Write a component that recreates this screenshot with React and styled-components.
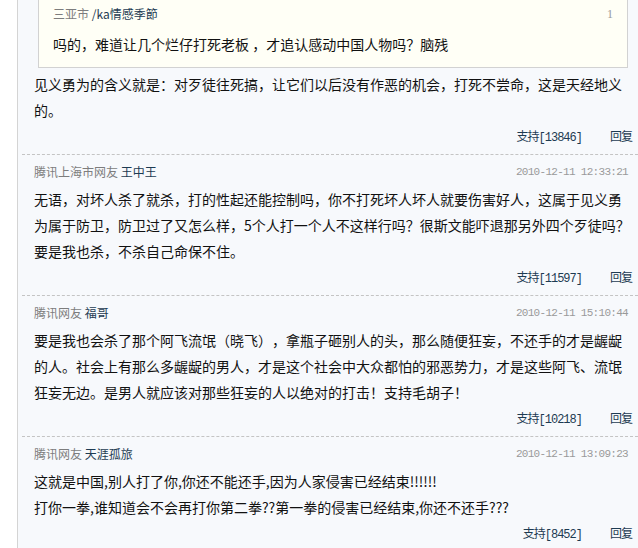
import React from "react";
import styled, { createGlobalStyle } from "styled-components";

const GlobalStyle = createGlobalStyle`
  html, body {
    margin: 0;
    padding: 0;
    background: #ffffff;
  }
  body {
    font-family: "Noto Sans CJK SC", "Liberation Sans", sans-serif;
    text-spacing-trim: space-all;
    overflow: hidden;
  }
`;

const comments = [
  {
    region: "腾讯上海市网友",
    user: "王中王",
    time: "2010-12-11 12:33:21",
    lines: [
      "无语，对坏人杀了就杀，打的性起还能控制吗，你不打死坏人坏人就要伤害好人，这属于见义勇为属于防卫，防卫过了又怎么样，5个人打一个人不这样行吗？很斯文能吓退那另外四个歹徒吗？要是我也杀，不杀自己命保不住。",
    ],
    votes: 11597,
  },
  {
    region: "腾讯网友",
    user: "福哥",
    time: "2010-12-11 15:10:44",
    lines: [
      "要是我也会杀了那个阿飞流氓（晓飞），拿瓶子砸别人的头，那么随便狂妄，不还手的才是龌龊的人。社会上有那么多龌龊的男人，才是这个社会中大众都怕的邪恶势力，才是这些阿飞、流氓狂妄无边。是男人就应该对那些狂妄的人以绝对的打击！支持毛胡子！",
    ],
    votes: 10218,
  },
  {
    region: "腾讯网友",
    user: "天涯孤旅",
    time: "2010-12-11 13:09:23",
    lines: [
      "这就是中国,别人打了你,你还不能还手,因为人家侵害已经结束!!!!!!",
      "打你一拳,谁知道会不会再打你第二拳??第一拳的侵害已经结束,你还不还手???",
    ],
    votes: 8452,
  },
];

function Actions({ votes }) {
  return (
    <ActionRow>
      <ActionLink>支持[{votes}]</ActionLink>
      <ActionLink>回复</ActionLink>
    </ActionRow>
  );
}

export default function App() {
  return (
    <Page>
      <GlobalStyle />
      <Thread>
        <Comment $first>
          <Quote>
            <QuoteHead>
              <span>
                <Meta>三亚市</Meta> <User>/ka情感季節</User>
              </span>
              <Floor>1</Floor>
            </QuoteHead>
            <QuoteText>吗的，难道让几个烂仔打死老板 ，才追认感动中国人物吗？脑残</QuoteText>
          </Quote>
          <Body>
            见义勇为的含义就是：对歹徒往死搞，让它们以后没有作恶的机会，打死不尝命，这是天经地义的。
          </Body>
          <Actions votes={13846} />
        </Comment>

        {comments.map((c) => (
          <Comment key={c.time}>
            <Header>
              <span>
                <Meta>{c.region}</Meta> <User>{c.user}</User>
              </span>
              <Time>{c.time}</Time>
            </Header>
            {c.lines.map((l, i) => (
              <Body key={i}>{l}</Body>
            ))}
            <Actions votes={c.votes} />
          </Comment>
        ))}
      </Thread>
    </Page>
  );
}

const Page = styled.div`
  padding-left: 17px;
  min-height: 100vh;
  background: #ffffff;
`;

const Thread = styled.div`
  min-height: 100vh;
  border-left: 1px solid #d4d4d4;
  background: #f7f9fc;
  padding-left: 4px;
`;

const Comment = styled.div`
  border-top: ${(p) => (p.$first ? "none" : "1px dashed #c4c4c4")};
  padding: ${(p) => (p.$first ? "0" : "6px")} 6px 6px 12px;
`;

const Quote = styled.div`
  margin: 0 4px 3px 4px;
  background: #fffff6;
  border: 1px solid #d2d2d2;
  border-top: none;
  padding: 4px 14px 10px 14px;
`;

const QuoteHead = styled.div`
  display: flex;
  justify-content: space-between;
  font-size: 12px;
  line-height: 20px;
`;

const Floor = styled.span`
  color: #999;
  font-family: "Liberation Serif", serif;
  font-size: 12px;
`;

const QuoteText = styled.div`
  margin-top: 7px;
  font-size: 14px;
  line-height: 26px;
  color: #111;
`;

const Header = styled.div`
  display: flex;
  justify-content: space-between;
  align-items: center;
  font-size: 12px;
  line-height: 22px;
  margin-bottom: 3px;
`;

const Meta = styled.span`
  color: #7d7d7d;
`;

const User = styled.span`
  color: #1d3b52;
`;

const Time = styled.span`
  color: #9a9a9a;
  font-family: "Liberation Mono", monospace;
  font-size: 11px;
  letter-spacing: -0.7px;
  padding-right: 4px;
`;

const Body = styled.p`
  margin: 0;
  font-size: 14px;
  line-height: 26px;
  color: #111;
`;

const ActionRow = styled.div`
  display: flex;
  justify-content: flex-end;
  gap: 28px;
  margin-top: 5px;
  line-height: 20px;
`;

const ActionLink = styled.a`
  color: #1d3b52;
  font-family: "Liberation Mono", "Noto Sans CJK SC", monospace;
  font-size: 12px;
  letter-spacing: -1px;
  cursor: pointer;
`;
